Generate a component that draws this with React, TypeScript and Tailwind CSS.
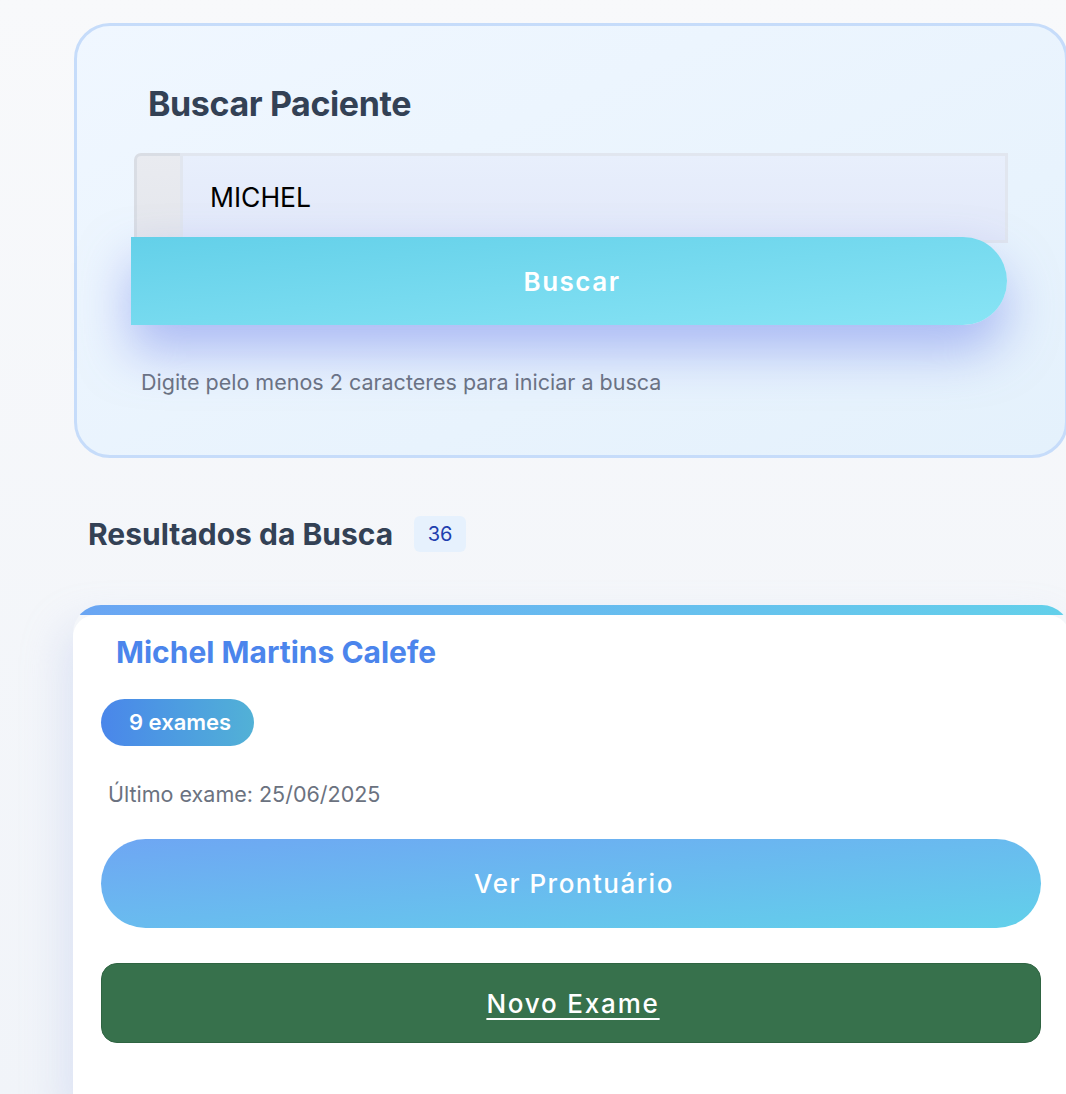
import { useState } from "react";

export default function App() {
  const [query, setQuery] = useState("MICHEL");

  return (
    <div
      className="min-h-screen w-full overflow-hidden bg-gradient-to-b from-[#f8f9fb] to-[#f1f4f9] pt-[23px]"
      style={{ fontFamily: "Inter, 'Noto Sans', sans-serif" }}
    >
      <div className="ml-[74px] w-[994px]">
        {/* search panel */}
        <div className="flex flex-col rounded-[36px] border-[3px] border-[#c6dcfa] bg-gradient-to-br from-[#f0f7ff] to-[#e4f1fc] pb-[59px]">
          <h2 className="ml-[71px] mt-[58px] text-[34px] leading-[40px] font-bold tracking-[-0.4px] text-[#334155]">
            Buscar Paciente
          </h2>
          <div className="ml-[57px] mt-[29px] flex h-[90px] w-[874px]">
            <div className="w-[46px] rounded-tl-[7px] border-l-[3px] border-t-[3px] border-[#d9dde4] bg-gradient-to-b from-[#e9ebf0] to-[#e4e6ec]" />
            <input
              value={query}
              onChange={(e) => setQuery(e.target.value)}
              className="flex-1 border-[3px] border-[#e1e6ef] bg-gradient-to-b from-[#e8effc] to-[#e2e8f9] pl-[27px] text-[26.5px] text-black outline-none"
            />
          </div>
          <button className="relative z-10 ml-[54px] mt-[-6px] h-[88px] w-[876px] rounded-r-[44px] bg-gradient-to-br from-[#63d0e9] to-[#88e4f5] pl-[6px] text-[26px] font-semibold tracking-[1.5px] text-white shadow-[0_26px_50px_rgba(110,130,235,0.5)]">
            Buscar
          </button>
          <p className="ml-[64px] mt-[43px] text-[21.5px] leading-[28px] text-[#6b7280]">
            Digite pelo menos 2 caracteres para iniciar a busca
          </p>
        </div>

        {/* results header */}
        <div className="ml-[14px] mt-[56px] flex items-center gap-[21px]">
          <h3 className="text-[30px] leading-[40px] font-bold text-[#334155]">
            Resultados da Busca
          </h3>
          <span className="flex h-[36px] w-[52px] items-center justify-center rounded-[6px] bg-[#e6f1fd] text-[20px] text-[#1e40af]">
            36
          </span>
        </div>

        {/* result card */}
        <div className="ml-[-1px] mt-[51px] w-[997px] overflow-hidden rounded-t-[28px] shadow-[-10px_20px_40px_rgba(180,195,235,0.35)]">
          <div className="h-[10px] bg-gradient-to-r from-[#6aa5f3] to-[#63d0ea]" />
          <div className="flex flex-col rounded-t-[22px] bg-white px-[28px] pb-[60px]">
            <h4 className="ml-[15px] mt-[17px] text-[30px] leading-[40px] font-bold text-[#4b85ec]">
              Michel Martins Calefe
            </h4>
            <span className="mt-[27px] flex h-[47px] w-[153px] items-center rounded-full bg-gradient-to-r from-[#4a86ea] to-[#52b1d6] pl-[28px] text-[22px] font-semibold text-white">
              9 exames
            </span>
            <p className="ml-[7px] mt-[34px] text-[21.5px] leading-[28px] text-[#6b7280]">
              Último exame: 25/06/2025
            </p>
            <button className="mt-[31px] h-[89px] w-[940px] rounded-full bg-gradient-to-br from-[#6ea6f3] to-[#62d0ea] pl-[6px] text-[26px] font-medium tracking-[1.5px] text-white">
              Ver Prontuário
            </button>
            <button className="mt-[35px] h-[80px] w-[940px] rounded-[16px] border border-[#2f6442] bg-[#37714c] pl-[4px] text-[26px] font-medium tracking-[1.8px] text-white underline underline-offset-[5px]">
              Novo Exame
            </button>
          </div>
        </div>
      </div>
    </div>
  );
}
